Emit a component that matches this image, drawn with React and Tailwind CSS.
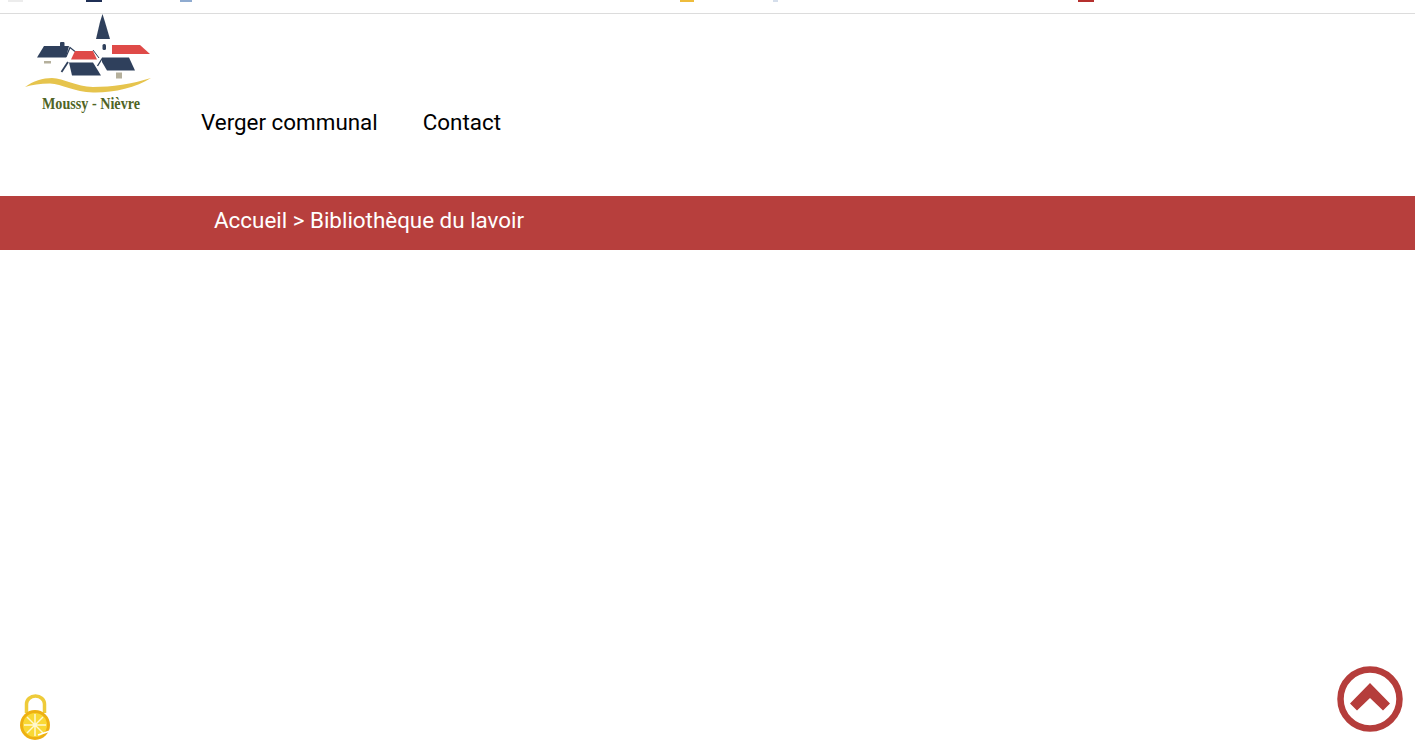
const tabMarks = [
  { id: 'a', className: 'ml-[8px] w-[15px] bg-[#ececec]' },
  { id: 'b', className: 'ml-[63px] w-[16px] bg-[#1f2f55]' },
  { id: 'c', className: 'ml-[78px] w-[12px] bg-[#8fabd0]' },
  { id: 'd', className: 'ml-[488px] w-[14px] bg-[#eebc3c]' },
  { id: 'e', className: 'ml-[79px] w-[5px] bg-[#d5deeb]' },
  { id: 'f', className: 'ml-[300px] w-[16px] bg-[#b5302e]' },
];

function Logo() {
  return (
    <svg width="130" height="84" viewBox="23 14 130 84" className="block">
      {/* eglise */}
      <polygon points="102.500,14 105,22 110,39 96,39 100,22" fill="#2f405c" />
      <rect x="102.500" y="44" width="3.500" height="6" rx="1.500" fill="#2f405c" />
      {/* maison gauche */}
      <rect x="60" y="42" width="4.500" height="5" rx="1" fill="#2f405c" />
      <polygon points="37,57.500 44,46 69,46 66,57.500" fill="#2f405c" />
      <polyline points="66,57 70,47.500 75,51.500" fill="none" stroke="#2f405c" strokeWidth="1.200" />
      <rect x="44" y="61" width="7" height="2.500" fill="#b5b09c" />
      {/* toits rouges */}
      <polygon points="71,59.500 75,51 93,51 97,59.500" fill="#df4a48" />
      <polygon points="112,45 140,45 150,54 112,54" fill="#df4a48" />
      <line x1="93" y1="50" x2="99" y2="58" stroke="#2f405c" strokeWidth="1" />
      {/* toits bleus */}
      <polygon points="69,62.500 93,62.500 101,75.500 72,75.500" fill="#2f405c" />
      <line x1="61.500" y1="72" x2="68" y2="62" stroke="#2f405c" strokeWidth="1.800" />
      <polygon points="102,57.500 129,57.500 135,70.500 107,70.500 102,62" fill="#2f405c" />
      <line x1="97.500" y1="66" x2="102.500" y2="58" stroke="#2f405c" strokeWidth="1.400" />
      <rect x="116" y="72.500" width="6" height="6" fill="#b5b09c" />
      {/* vague */}
      <path
        d="M25 87 C 33 81 43 78 52 78 C 64 78.500 76 86.500 93 87 C 112 87 132 84 151 78 C 136 88 112 93 93 92.500 C 74 92 62 84 50 83.500 C 40 83.500 32 85 25 87 Z"
        fill="#e6c44d"
      />
    </svg>
  );
}

function LockBadge() {
  return (
    <svg width="36" height="50" viewBox="18 693 36 50" className="block">
      <path d="M26.500 713 V704 a9 8 0 0 1 18 0 V713" fill="none" stroke="#eecb3a" strokeWidth="3.500" />
      <circle cx="35" cy="725" r="15" fill="#eeb012" />
      <circle cx="35" cy="725" r="12" fill="#f9d835" />
      <g stroke="#fff8d0" strokeWidth="1.500">
        <line x1="35" y1="714" x2="35" y2="736" />
        <line x1="24" y1="725" x2="46" y2="725" />
        <line x1="27" y1="717" x2="43" y2="733" />
        <line x1="43" y1="717" x2="27" y2="733" />
      </g>
      <circle cx="35" cy="725" r="2" fill="#fff8d0" />
      <path d="M38 735 L50 731" fill="none" stroke="#fff" strokeWidth="1.500" />
    </svg>
  );
}

function ScrollTop() {
  return (
    <svg width="66" height="66" viewBox="0 0 66 66" className="block">
      <circle cx="33" cy="33" r="29.500" fill="none" stroke="#b53d3b" strokeWidth="6.500" />
      <polygon points="33,17 53,37.500 46,44.500 33,32 20,44.500 13,37.500" fill="#b53d3b" />
    </svg>
  );
}

export default function App() {
  return (
    <div className="min-h-screen bg-white font-['Roboto',sans-serif] text-black">
      {/* reste de la barre du haut */}
      <div className="flex h-[14px] items-start border-b border-[#dcdcdc]">
        {tabMarks.map((mark) => (
          <span key={mark.id} className={`h-[2px] ${mark.className}`} />
        ))}
      </div>

      <header className="flex h-[182px]">
        <div className="w-[201px] pl-[23px]">
          <Logo />
          <p className="-mt-[2px] w-[136px] scale-x-[0.885] text-center font-['Liberation_Serif',serif] text-[16px] leading-[16px] font-bold whitespace-nowrap text-[#4f6425]">
            Moussy - Nièvre
          </p>
        </div>
        <nav className="flex gap-[45px] pt-[93px] text-[22.4px] leading-[30px]">
          <a href="#verger">Verger communal</a>
          <a href="#contact">Contact</a>
        </nav>
      </header>

      <div className="h-[54px] bg-[#b73f3d] pt-[9px] pl-[214px] text-[22.4px] leading-[30px] text-white">
        Accueil &gt; Bibliothèque du lavoir
      </div>

      <div className="fixed bottom-[9px] left-[18px]">
        <LockBadge />
      </div>
      <button type="button" className="fixed right-[12px] bottom-[20px]">
        <ScrollTop />
      </button>
    </div>
  );
}
